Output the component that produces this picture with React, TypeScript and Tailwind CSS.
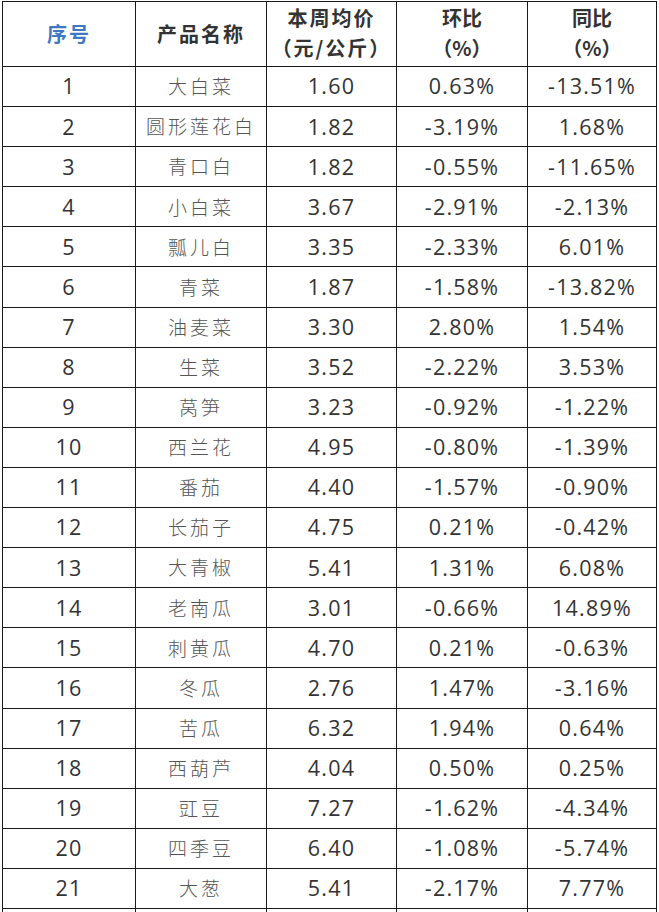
const rows: [string, string, string, string, string][] = [
  ["1", "大白菜", "1.60", "0.63%", "-13.51%"],
  ["2", "圆形莲花白", "1.82", "-3.19%", "1.68%"],
  ["3", "青口白", "1.82", "-0.55%", "-11.65%"],
  ["4", "小白菜", "3.67", "-2.91%", "-2.13%"],
  ["5", "瓢儿白", "3.35", "-2.33%", "6.01%"],
  ["6", "青菜", "1.87", "-1.58%", "-13.82%"],
  ["7", "油麦菜", "3.30", "2.80%", "1.54%"],
  ["8", "生菜", "3.52", "-2.22%", "3.53%"],
  ["9", "莴笋", "3.23", "-0.92%", "-1.22%"],
  ["10", "西兰花", "4.95", "-0.80%", "-1.39%"],
  ["11", "番茄", "4.40", "-1.57%", "-0.90%"],
  ["12", "长茄子", "4.75", "0.21%", "-0.42%"],
  ["13", "大青椒", "5.41", "1.31%", "6.08%"],
  ["14", "老南瓜", "3.01", "-0.66%", "14.89%"],
  ["15", "刺黄瓜", "4.70", "0.21%", "-0.63%"],
  ["16", "冬瓜", "2.76", "1.47%", "-3.16%"],
  ["17", "苦瓜", "6.32", "1.94%", "0.64%"],
  ["18", "西葫芦", "4.04", "0.50%", "0.25%"],
  ["19", "豇豆", "7.27", "-1.62%", "-4.34%"],
  ["20", "四季豆", "6.40", "-1.08%", "-5.74%"],
  ["21", "大葱", "5.41", "-2.17%", "7.77%"],
];

const cell = "border-[1.5px] border-[#1a1a1a] text-center align-middle p-0";
const num = "text-[21.5px] tracking-[1.2px] text-[#333] [font-family:'Open_Sans','Noto_Sans',sans-serif]";
const cjk = "[font-family:'Noto_Sans_CJK_SC',sans-serif]";

export default function App() {
  return (
    <div className="w-[659px] h-[912px] overflow-hidden bg-white pt-[1px] pl-[2px]">
      <table className="border-collapse w-[654px] table-fixed">
        <colgroup>
          <col className="w-[133px]" />
          <col className="w-[131px]" />
          <col className="w-[130px]" />
          <col className="w-[131px]" />
          <col className="w-[129px]" />
        </colgroup>
        <thead>
          <tr className="h-[65px]">
            <th className={`${cell} ${cjk} text-[20px] font-bold text-[#3f78c2] tracking-[2px]`}>序号</th>
            <th className={`${cell} ${cjk} text-[20px] font-bold text-[#333] tracking-[2px]`}>产品名称</th>
            <th className={`${cell} ${cjk} text-[20px] font-bold text-[#333] tracking-[2px] leading-[30px] pb-[3px]`}>
              本周均价
              <br />
              （元/公斤）
            </th>
            <th className={`${cell} ${cjk} text-[20px] font-bold text-[#333] leading-[30px] pb-[3px]`}>
              环比
              <br />
              （%）
            </th>
            <th className={`${cell} ${cjk} text-[20px] font-bold text-[#333] leading-[30px] pb-[3px]`}>
              同比
              <br />
              （%）
            </th>
          </tr>
        </thead>
        <tbody>
          {rows.map((r) => (
            <tr key={r[0]} className="h-[40.1px]">
              <td className={`${cell} ${num}`}>{r[0]}</td>
              <td className={`${cell} ${cjk} text-[19px] font-light text-[#555] tracking-[3px]`}>{r[1]}</td>
              <td className={`${cell} ${num}`}>{r[2]}</td>
              <td className={`${cell} ${num}`}>{r[3]}</td>
              <td className={`${cell} ${num}`}>{r[4]}</td>
            </tr>
          ))}
          <tr className="h-[40px]">
            <td className={cell}></td>
            <td className={cell}></td>
            <td className={cell}></td>
            <td className={cell}></td>
            <td className={cell}></td>
          </tr>
        </tbody>
      </table>
    </div>
  );
}
